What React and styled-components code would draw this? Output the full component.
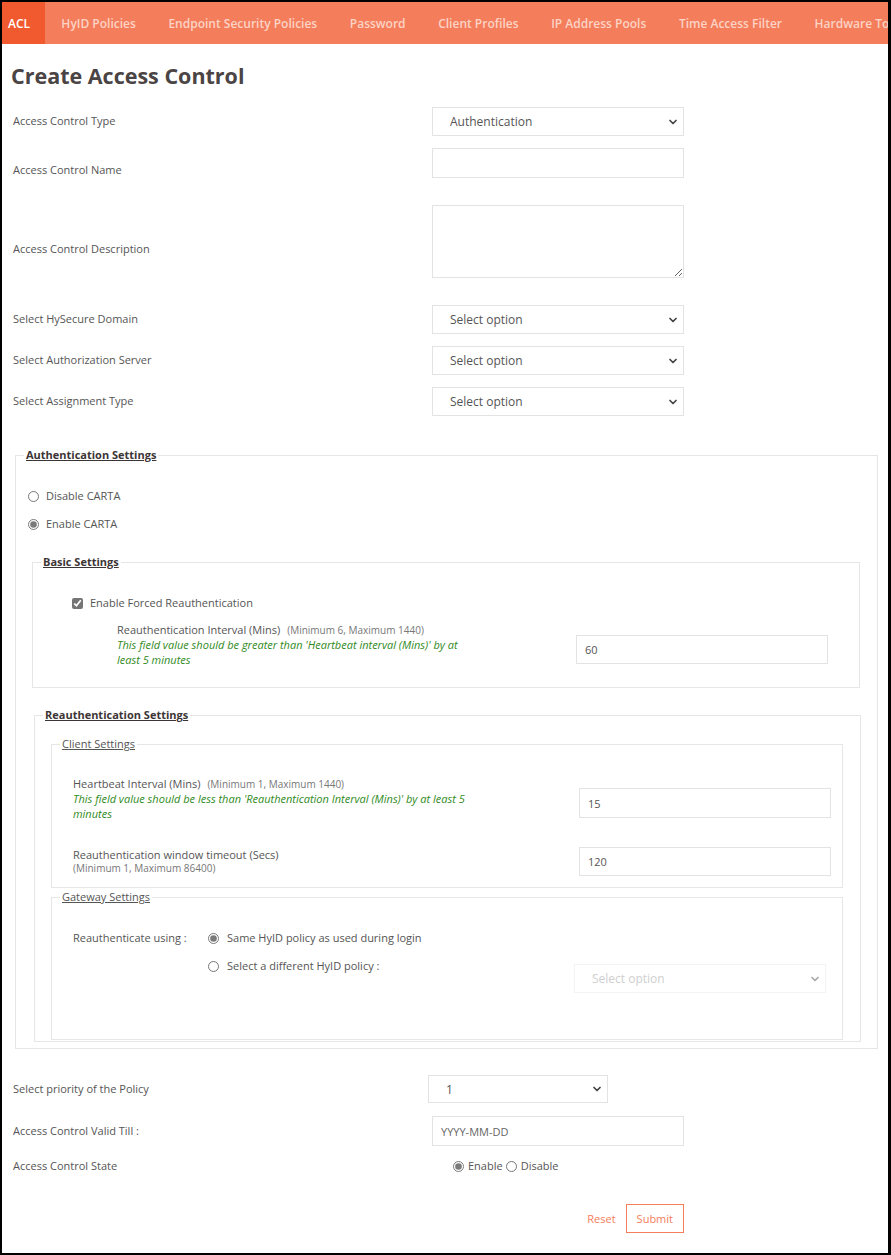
import React from "react"
import styled, { createGlobalStyle } from "styled-components"
import { ChevronDown } from "lucide-react"

const Global = createGlobalStyle`
  html, body { margin: 0; padding: 0; background: #fff; }
  body { font-family: "Open Sans", "Noto Sans", sans-serif; }
  * { box-sizing: border-box; }
`;

const Frame = styled.div`
  width: 891px;
  height: 1255px;
  border: 2px solid #000;
  border-right-width: 3px;
  overflow: hidden;
  background: #fff;
`;

const Nav = styled.div`
  display: flex;
  height: 42px;
  background: #f47d5c;
  white-space: nowrap;
  overflow: hidden;
`;

const NavItem = styled.div`
  display: flex;
  align-items: center;
  padding: ${p => (p.active ? "0 15px 0 6px" : "0 16.3px")};
  background: ${p => (p.active ? "#f15a2f" : "transparent")};
  color: ${p => (p.active ? "#fff" : "#fdd3c4")};
  font-size: 12px;
  font-weight: 600;
  flex-shrink: 0;
`;

const Page = styled.div`
  padding: 0 10px 0 11px;
`;

const Title = styled.h1`
  margin: 19px 0 0 -2px;
  font-size: 21.5px;
  line-height: 26px;
  font-weight: 700;
  color: #4b4444;
`;

const Row = styled.div`
  display: flex;
  align-items: flex-start;
  margin-top: ${p => p.mt || 0}px;
`;

const Label = styled.div`
  width: ${p => p.w || 419}px;
  flex-shrink: 0;
  padding-top: ${p => p.lt || 0}px;
  font-size: 11px;
  line-height: 14px;
  color: #555;
`;

const SelectWrap = styled.div`
  position: relative;
  width: ${p => p.w || 252}px;
  height: ${p => p.h || 29}px;
  margin-top: ${p => p.mt || 0}px;
  color: ${p => (p.disabled ? "#bbb" : "#555")};
  flex-shrink: 0;
`;

const Select = styled.select`
  appearance: none;
  width: 100%;
  height: 100%;
  border: 1px solid ${p => (p.disabled ? "#eee" : "#e3e3e3")};
  background: #fff;
  padding: 0 0 0 17px;
  font-family: "Open Sans", sans-serif;
  font-size: 12px;
  color: inherit;
  outline: none;
`;

const Arrow = styled(ChevronDown)`
  position: absolute;
  right: 5px;
  top: 50%;
  transform: translateY(-50%);
  pointer-events: none;
  color: ${p => (p.faded ? "#aaa" : "#444")};
`;

const Input = styled.input`
  width: 252px;
  height: ${p => p.h || 30}px;
  margin-top: ${p => p.mt || 0}px;
  border: 1px solid #e3e3e3;
  padding: 0 8px;
  font-family: "Open Sans", sans-serif;
  font-size: 11px;
  color: #555;
  outline: none;
  flex-shrink: 0;
  &::placeholder { color: #666; }
`;

const TextArea = styled.textarea`
  width: 252px;
  height: 73px;
  border: 1px solid #e3e3e3;
  resize: vertical;
  outline: none;
`;

const Fieldset = styled.fieldset`
  margin: ${p => p.m || "0"};
  padding: ${p => p.pad || "0"};
  border: 1px solid #e6e6e6;
  min-width: 0;
`;

const Legend = styled.legend`
  margin-left: ${p => p.ml ?? 8}px;
  padding: 0 2px;
  font-size: 11px;
  line-height: 14px;
  font-weight: ${p => (p.plain ? 400 : 700)};
  color: ${p => (p.plain ? "#555" : "#3d3535")};
  text-decoration: underline;
`;

const Option = styled.label`
  display: flex;
  align-items: center;
  gap: ${p => p.gap || 7}px;
  margin-top: ${p => p.mt || 0}px;
  margin-left: ${p => p.ml || 0}px;
  width: ${p => (p.w ? p.w + "px" : "auto")};
  font-size: 11px;
  line-height: 14px;
  color: #555;
  flex-shrink: 0;
`;

const Radio = styled.input.attrs({ type: "radio" })`
  margin: 0;
  width: 11px;
  height: 11px;
  accent-color: #7a7a7a;
`;

const Check = styled.input.attrs({ type: "checkbox" })`
  margin: 0;
  width: 11px;
  height: 11px;
  accent-color: #757575;
`;

const FieldRow = styled.div`
  display: flex;
  align-items: flex-start;
  justify-content: space-between;
  margin-top: ${p => p.mt || 0}px;
  padding-left: ${p => p.pl || 0}px;
  padding-right: ${p => p.pr || 0}px;
`;

const FieldText = styled.div`
  width: ${p => p.w || 370}px;
  padding-top: ${p => p.pt || 0}px;
  font-size: 11px;
  line-height: 14px;
  color: #555;
`;

const Hint = styled.span`
  display: ${p => (p.block ? "block" : "inline")};
  margin-left: ${p => (p.block ? 0 : 7)}px;
  font-size: 10px;
  line-height: 12px;
  color: #777;
`;

const Note = styled.div`
  font-size: 11px;
  line-height: 15px;
  font-style: italic;
  color: #2f8a22;
`;

const GatewayRow = styled.div`
  display: flex;
  align-items: flex-start;
  margin-top: ${p => p.mt || 0}px;
  padding-left: 21px;
`;

const ButtonRow = styled.div`
  width: 671px;
  display: flex;
  justify-content: flex-end;
  align-items: center;
  gap: 10px;
  margin-top: 31px;
`;

const ResetLink = styled.span`
  font-size: 11px;
  color: #f47d5c;
`;

const Submit = styled.button`
  height: 29px;
  padding: 0 10px;
  border: 1px solid #f47d5c;
  background: #fff;
  color: #f47d5c;
  font-family: "Open Sans", sans-serif;
  font-size: 11px;
`;

const tabs = ["ACL", "HyID Policies", "Endpoint Security Policies", "Password", "Client Profiles", "IP Address Pools", "Time Access Filter", "Hardware Tokens"];

const Dropdown = ({ value, w, h, mt, disabled }) => (
  <SelectWrap w={w} h={h} mt={mt} disabled={disabled}>
    <Select disabled={disabled} defaultValue={value}>
      <option>{value}</option>
    </Select>
    <Arrow size={12} strokeWidth={3.5} faded={disabled ? 1 : 0} />
  </SelectWrap>
)

export default function App() {
  return (
    <Frame>
      <Global />
      <Nav>
        {tabs.map((t, i) => (
          <NavItem key={t} active={i === 0}>{t}</NavItem>
        ))}
      </Nav>
      <Page>
        <Title>Create Access Control</Title>

        <Row mt={18}>
          <Label lt={7}>Access Control Type</Label>
          <Dropdown value="Authentication" />
        </Row>
        <Row mt={12}>
          <Label lt={15}>Access Control Name</Label>
          <Input />
        </Row>
        <Row mt={27}>
          <Label lt={37}>Access Control Description</Label>
          <TextArea />
        </Row>
        <Row mt={27}>
          <Label lt={7}>Select HySecure Domain</Label>
          <Dropdown value="Select option" />
        </Row>
        <Row mt={12}>
          <Label lt={7}>Select Authorization Server</Label>
          <Dropdown value="Select option" />
        </Row>
        <Row mt={12}>
          <Label lt={7}>Select Assignment Type</Label>
          <Dropdown value="Select option" />
        </Row>

        <Fieldset m="32px 0 0 2px" pad="0 17px 6px 13px">
          <Legend ml={-5}>Authentication Settings</Legend>
          <Option mt={27} ml={-1}><Radio name="carta" /> Disable CARTA</Option>
          <Option mt={14} ml={-1}><Radio name="carta" defaultChecked /> Enable CARTA</Option>

          <Fieldset m="24px 0 0 3px" pad="0 0 20px 0">
            <Legend>Basic Settings</Legend>
            <Option mt={27} ml={39}><Check defaultChecked /> Enable Forced Reauthentication</Option>
            <FieldRow mt={13} pl={84} pr={31}>
              <FieldText w={362}>
                Reauthentication Interval (Mins)<Hint>(Minimum 6, Maximum 1440)</Hint>
                <Note>This field value should be greater than 'Heartbeat interval (Mins)' by at least 5 minutes</Note>
              </FieldText>
              <Input mt={12} h={29} defaultValue="60" />
            </FieldRow>
          </Fieldset>

          <Fieldset m="20px -1px 0 5px" pad="0 17px 1px 16px">
            <Legend ml={-8}>Reauthentication Settings</Legend>
            <Fieldset m="15px 0 0 0" pad="0 11px 11px 21px">
              <Legend plain ml={-13}>Client Settings</Legend>
              <FieldRow mt={26}>
                <FieldText w={420}>
                  Heartbeat Interval (Mins)<Hint>(Minimum 1, Maximum 1440)</Hint>
                  <Note>This field value should be less than 'Reauthentication Interval (Mins)' by at least 5 minutes</Note>
                </FieldText>
                <Input mt={11} defaultValue="15" />
              </FieldRow>
              <FieldRow mt={26}>
                <FieldText w={420} pt={1}>
                  Reauthentication window timeout (Secs)
                  <Hint block>(Minimum 1, Maximum 86400)</Hint>
                </FieldText>
                <Input h={29} defaultValue="120" />
              </FieldRow>
            </Fieldset>
            <Fieldset m="2px 0 0 0" pad="0 0 46px 0">
              <Legend plain>Gateway Settings</Legend>
              <GatewayRow mt={27}>
                <Label w={135}>Reauthenticate using :</Label>
                <Option gap={8}><Radio name="gw" defaultChecked /> Same HyID policy as used during login</Option>
              </GatewayRow>
              <GatewayRow mt={14}>
                <Label w={135} />
                <Option gap={8} w={366}>
                  <Radio name="gw" /> Select a different HyID policy :
                </Option>
                <Dropdown value="Select option" mt={5} disabled />
              </GatewayRow>
            </Fieldset>
          </Fieldset>
        </Fieldset>

        <Row mt={26}>
          <Label w={415} lt={7}>Select priority of the Policy</Label>
          <Dropdown value="1" w={180} h={28} />
        </Row>
        <Row mt={13}>
          <Label lt={8}>Access Control Valid Till :</Label>
          <Input placeholder="YYYY-MM-DD" />
        </Row>
        <Row mt={13}>
          <Label>Access Control State</Label>
          <Option gap={4} ml={21}><Radio name="state" defaultChecked /> Enable</Option>
          <Option gap={4} ml={3}><Radio name="state" /> Disable</Option>
        </Row>
        <ButtonRow>
          <ResetLink>Reset</ResetLink>
          <Submit>Submit</Submit>
        </ButtonRow>
      </Page>
    </Frame>
  )
}
